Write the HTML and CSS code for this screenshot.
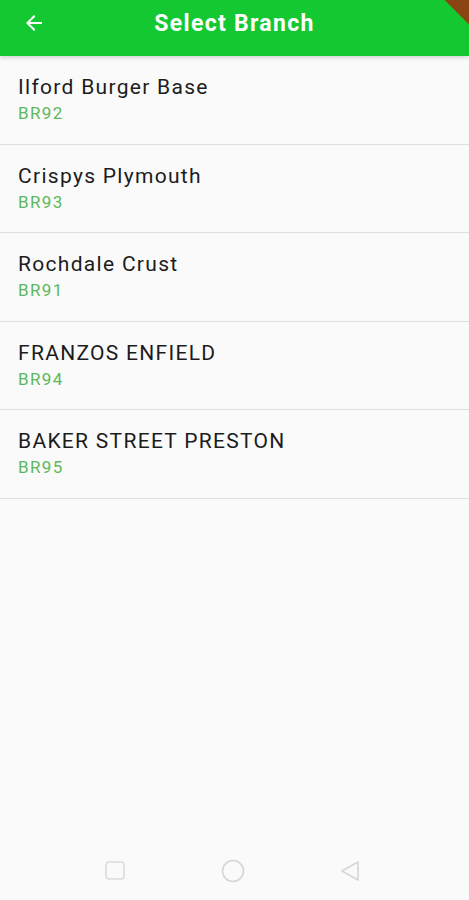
FILE: index.html
```html
<!DOCTYPE html>
<html lang="en">
<head>
    <meta charset="UTF-8">
    <meta name="viewport" content="width=device-width, initial-scale=1.0">
    <title>Select Branch</title>
    <link rel="stylesheet" href="styles.css">
</head>
<body>
    <div class="app-bar">
        <a href="#" class="back-button">
            <svg width="24" height="24" viewBox="0 0 24 24"><path d="M20 11H7.83l5.59-5.59L12 4l-8 8 8 8 1.41-1.41L7.83 13H20v-2z" fill="#fff"/></svg>
        </a>
        <div class="screen-title">Select Branch</div>
        <div class="debug-ribbon"></div>
    </div>

    <div class="branch-list">
        <div class="branch-item">
            <div class="branch-name">Ilford Burger Base</div>
            <div class="branch-code">BR92</div>
        </div>
        <div class="branch-item">
            <div class="branch-name">Crispys Plymouth</div>
            <div class="branch-code">BR93</div>
        </div>
        <div class="branch-item">
            <div class="branch-name">Rochdale Crust</div>
            <div class="branch-code">BR91</div>
        </div>
        <div class="branch-item">
            <div class="branch-name">FRANZOS ENFIELD</div>
            <div class="branch-code">BR94</div>
        </div>
        <div class="branch-item">
            <div class="branch-name">BAKER STREET PRESTON</div>
            <div class="branch-code">BR95</div>
        </div>
    </div>

    <div class="nav-bar">
        <svg width="22" height="22" viewBox="0 0 22 22"><rect x="2" y="2" width="18" height="17" rx="3" fill="none" stroke="#dcdcdc" stroke-width="1.6"/></svg>
        <svg width="26" height="26" viewBox="0 0 26 26"><circle cx="13" cy="13" r="10.5" fill="none" stroke="#d6d6d6" stroke-width="1.6"/></svg>
        <svg width="22" height="24" viewBox="0 0 22 24"><path d="M19 3 L3 12 L19 21 Z" fill="none" stroke="#d6d6d6" stroke-width="1.6" stroke-linejoin="round"/></svg>
    </div>
</body>
</html>
```

FILE: styles.css
```css
body {
    font-family: Roboto, "Noto Sans", sans-serif;
    margin: 0;
    background-color: #fafafa;
    min-height: 900px;
    display: flex;
    flex-direction: column;
    overflow: hidden;
}
.app-bar {
    height: 56px;
    box-sizing: border-box;
    padding-bottom: 10px;
    background-color: #14c832;
    display: flex;
    align-items: center;
    position: relative;
    overflow: hidden;
    box-shadow: 0 2px 4px rgba(0,0,0,0.15);
    z-index: 1;
}
.back-button {
    width: 24px;
    height: 24px;
    margin-left: 22px;
    display: flex;
}
.screen-title {
    flex-grow: 1;
    text-align: center;
    color: #fff;
    font-size: 23px;
    font-weight: bold;
    letter-spacing: 1.3px;
    margin-right: 46px;
}
.debug-ribbon {
    position: absolute;
    top: -16px;
    right: -46px;
    width: 110px;
    height: 26px;
    background-color: #8b4513;
    transform: rotate(45deg);
}
.branch-list {
    display: flex;
    flex-direction: column;
}
.branch-item {
    height: 88.5px;
    box-sizing: border-box;
    padding: 18px 18px 0;
    border-bottom: 1.5px solid #dedede;
}
.branch-name {
    font-size: 21px;
    letter-spacing: 1.3px;
    color: #1c1c1c;
    line-height: 27px;
}
.branch-code {
    font-size: 17px;
    letter-spacing: 1.4px;
    color: #5cb85c;
    line-height: 24px;
}
.nav-bar {
    margin-top: auto;
    height: 58px;
    display: flex;
    justify-content: space-between;
    align-items: center;
    padding: 0 108px 0 104px;
}
```
